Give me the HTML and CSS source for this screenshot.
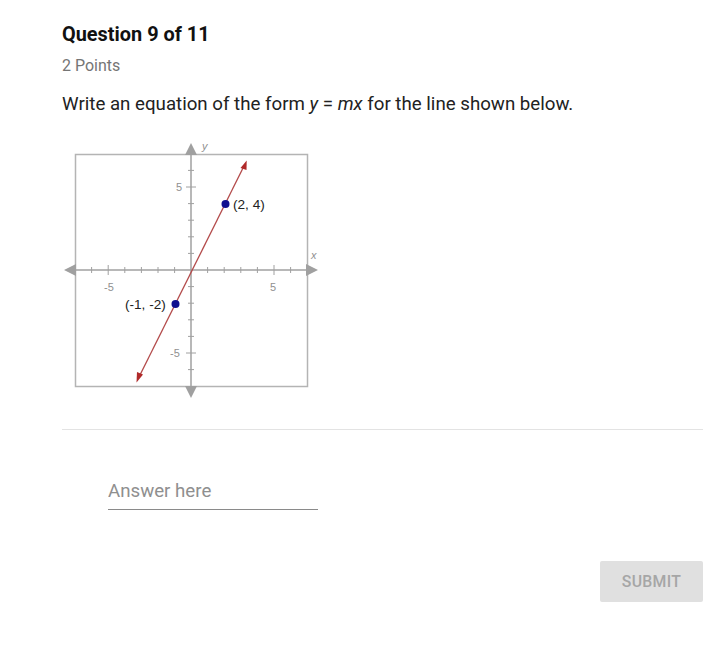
FILE: index.html
```html
<!DOCTYPE html>
<html>
<head>
<meta charset="utf-8">
<link rel="stylesheet" href="styles.css">
</head>
<body>
<div class="page">
  <h1 class="title">Question 9 of 11</h1>
  <div class="points">2 Points</div>
  <p class="prompt">Write an equation of the form <i>y</i> = <i>mx</i> for the line shown below.</p>
  <div class="graph">
    <svg width="262" height="262" viewBox="62 140 262 262" xmlns="http://www.w3.org/2000/svg">
      <rect x="75.5" y="154.5" width="232" height="232" fill="#fff" stroke="#b4b4b4" stroke-width="1.5"/>
      <!-- axes -->
      <line x1="72" y1="270" x2="310" y2="270" stroke="#a0a0a0" stroke-width="1.5"/>
      <line x1="191" y1="152" x2="191" y2="388" stroke="#a0a0a0" stroke-width="1.5"/>
      <polygon points="64,270 76,264 76,276" fill="#a0a0a0"/>
      <polygon points="318,270 306,264 306,276" fill="#a0a0a0"/>
      <polygon points="191,143 185,155 197,155" fill="#a0a0a0"/>
      <polygon points="191,398 185,386 197,386" fill="#a0a0a0"/>
      <g stroke="#a0a0a0" stroke-width="1">
        <line x1="91.6" y1="267" x2="91.6" y2="273"/>
        <line x1="108.2" y1="265" x2="108.2" y2="275"/>
        <line x1="124.8" y1="267" x2="124.8" y2="273"/>
        <line x1="141.4" y1="267" x2="141.4" y2="273"/>
        <line x1="158" y1="267" x2="158" y2="273"/>
        <line x1="174.6" y1="267" x2="174.6" y2="273"/>
        <line x1="207.6" y1="267" x2="207.6" y2="273"/>
        <line x1="224.2" y1="267" x2="224.2" y2="273"/>
        <line x1="240.8" y1="267" x2="240.8" y2="273"/>
        <line x1="257.4" y1="267" x2="257.4" y2="273"/>
        <line x1="274" y1="265" x2="274" y2="275"/>
        <line x1="290.6" y1="267" x2="290.6" y2="273"/>
        <line x1="188" y1="170.4" x2="194" y2="170.4"/>
        <line x1="186" y1="187" x2="196" y2="187"/>
        <line x1="188" y1="203.6" x2="194" y2="203.6"/>
        <line x1="188" y1="220.2" x2="194" y2="220.2"/>
        <line x1="188" y1="236.8" x2="194" y2="236.8"/>
        <line x1="188" y1="253.4" x2="194" y2="253.4"/>
        <line x1="188" y1="286.6" x2="194" y2="286.6"/>
        <line x1="188" y1="303.2" x2="194" y2="303.2"/>
        <line x1="188" y1="319.8" x2="194" y2="319.8"/>
        <line x1="188" y1="336.4" x2="194" y2="336.4"/>
        <line x1="186" y1="353" x2="196" y2="353"/>
        <line x1="188" y1="369.6" x2="194" y2="369.6"/>
      </g>
      <g font-family="Liberation Sans, Arial, sans-serif" font-size="11" fill="#909090">
        <text x="104" y="291">-5</text>
        <text x="270" y="291">5</text>
        <text x="176" y="191">5</text>
        <text x="170" y="357">-5</text>
        <text x="202" y="150" font-style="italic">y</text>
        <text x="311" y="259" font-style="italic">x</text>
      </g>
      <!-- line -->
      <line x1="138" y1="379" x2="245" y2="164" stroke="#b34a4a" stroke-width="1.3"/>
      <polygon points="246.7,160.5 240.5,168 246.5,170" fill="#b02a2a"/>
      <polygon points="136.5,382.5 137,372 143,374.5" fill="#b02a2a"/>
      <circle cx="225.5" cy="204" r="4" fill="#101090"/>
      <circle cx="175.5" cy="304" r="4" fill="#101090"/>
      <g font-family="Liberation Sans, Arial, sans-serif" font-size="13.6" fill="#222">
        <text x="233" y="208.5">(2, 4)</text>
        <text x="125" y="308.5">(-1, -2)</text>
      </g>
    </svg>
  </div>
  <hr class="divider">
  <div class="answer">
    <input class="answer-input" type="text" placeholder="Answer here">
  </div>
  <div class="actions">
    <button class="submit" disabled>SUBMIT</button>
  </div>
</div>
</body>
</html>
```
FILE: styles.css
```css
html, body {
  margin: 0;
  padding: 0;
  background: #fff;
}
body {
  font-family: Roboto, "Noto Sans", Arial, sans-serif;
  color: #212121;
}
.page {
  padding: 22px 17px 0 62px;
}
.title {
  margin: 0;
  font-size: 19.9px;
  line-height: 25px;
  font-weight: 700;
  color: #111;
}
.points {
  margin-top: 9px;
  font-size: 16px;
  line-height: 19px;
  color: #757575;
}
.prompt {
  margin: 18px 0 0;
  font-size: 18.7px;
  line-height: 23px;
  color: #222;
}
.graph {
  margin-top: 24px;
  height: 262px;
}
.graph svg {
  display: block;
}
.divider {
  margin: 27px 0 0;
  border: 0;
  border-top: 1px solid #e3e3e3;
  height: 0;
}
.answer {
  padding-left: 46px;
  margin-top: 46px;
}
.answer-input {
  display: block;
  width: 210px;
  box-sizing: border-box;
  border: 0;
  border-bottom: 1px solid #8a8a8a;
  padding: 4px 0 6px;
  font-family: Roboto, "Noto Sans", Arial, sans-serif;
  font-size: 18.7px;
  line-height: 23px;
  color: #212121;
  outline: none;
  background: transparent;
}
.answer-input::placeholder {
  color: #8f8f8f;
}
.actions {
  display: flex;
  justify-content: flex-end;
  margin-top: 51px;
}
.submit {
  width: 103px;
  height: 41px;
  border: 0;
  border-radius: 2px;
  background: #e0e0e0;
  color: #a6a6a6;
  font-family: Roboto, "Noto Sans", Arial, sans-serif;
  font-size: 15.8px;
  font-weight: 500;
  letter-spacing: 0.3px;
}
```
